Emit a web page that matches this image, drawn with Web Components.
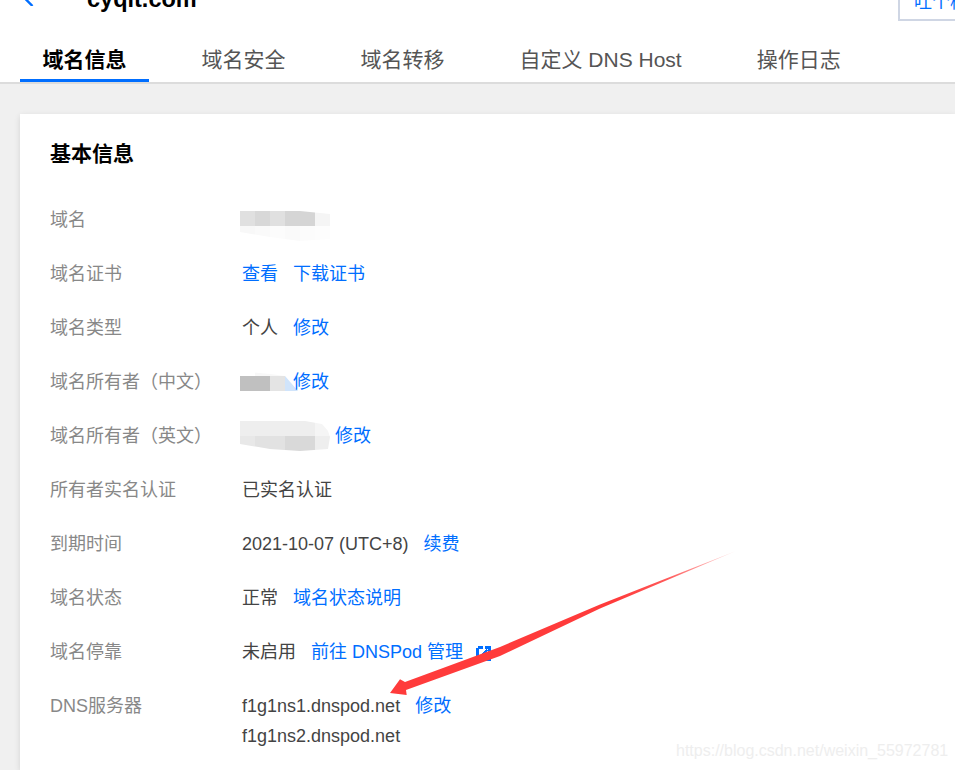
<!DOCTYPE html>
<html lang="zh"><head><meta charset="utf-8"><title>基本信息</title>
<style>
html,body{margin:0;padding:0;height:770px;overflow:hidden;background:#f0f0f0;}
body{font-family:"Liberation Sans","Noto Sans CJK SC",sans-serif;position:relative;}
</style></head><body>
<dp-header title-text="cyqit.com" action="吐个槽"></dp-header>
<dp-tabs>
  <dp-tab active>域名信息</dp-tab><dp-tab>域名安全</dp-tab><dp-tab>域名转移</dp-tab><dp-tab>自定义 DNS Host</dp-tab><dp-tab>操作日志</dp-tab>
</dp-tabs>
<dp-card heading="基本信息">
  <dp-row label="域名"><dp-mosaic w="78" x="-2" y="6" cols="6" clip="0 0,60px 0,90px 3px,90px 28px,60px 30px,30px 26px,0 21px" colors="#e0e0e0 #d8d8d8 #e0e0e0 #d5d5d5 #d5d5d5 #f5f5f5 #f8f8f8 #fafafa #fcfcfc #fafafa #fcfcfc #fdfdfd"></dp-mosaic></dp-row>
  <dp-row label="域名证书"><dp-link>查看</dp-link><dp-link>下载证书</dp-link></dp-row>
  <dp-row label="域名类型"><span>个人</span><dp-link>修改</dp-link></dp-row>
  <dp-row label="域名所有者（中文）"><dp-mosaic w="36" x="-2" y="-6" cols="4" clip="0 10px,30px 13px,45px 15px,58px 30px,0 30px" colors="#ffffff #f8f8f8 #f8f8f8 #ffffff #c0c0c0 #c0c0c0 #e4e4e4 #d0e4fb"></dp-mosaic><dp-link>修改</dp-link></dp-row>
  <dp-row label="域名所有者（英文）"><dp-mosaic w="78" x="-2" y="0" cols="6" clip="0 0,65px 0,82px 3px,88px 10px,90px 16px,88px 28px,60px 30px,30px 28px,0 23px" colors="#eeeeee #eeeeee #eeeeee #eeeeee #eeeeee #f5f5f5 #e8e8e8 #e2e2e2 #e2e2e2 #d9d9d9 #d9d9d9 #eeeeee"></dp-mosaic><dp-link>修改</dp-link></dp-row>
  <dp-row label="所有者实名认证"><span>已实名认证</span></dp-row>
  <dp-row label="到期时间"><span>2021-10-07 (UTC+8)</span><dp-link>续费</dp-link></dp-row>
  <dp-row label="域名状态"><span>正常</span><dp-link>域名状态说明</dp-link></dp-row>
  <dp-row label="域名停靠"><span>未启用</span><dp-link>前往 DNSPod 管理<dp-ext-icon></dp-ext-icon></dp-link></dp-row>
  <dp-row label="DNS服务器"><div><div style="display:flex;gap:15px"><span>f1g1ns1.dnspod.net</span><dp-link>修改</dp-link></div><div>f1g1ns2.dnspod.net</div></div></dp-row>
</dp-card>
<dp-arrow></dp-arrow>
<dp-watermark>https://blog.csdn.net/weixin_55972781</dp-watermark>
<script>
function def(name, html, extra){
  customElements.define(name, class extends HTMLElement{
    constructor(){super();this.attachShadow({mode:"open"}).innerHTML=html;}
    connectedCallback(){ if(extra) extra(this); }
  });
}
def("dp-header",`<style>
:host{display:block;height:38px;overflow:hidden;background:#fff;}
.in{display:flex;align-items:flex-start;margin-top:-16px;height:36px;}
svg{flex:none;margin:0 0 0 21px;width:16px;height:22px;}
h1{margin:0 0 0 50px;font:bold 23.5px/30px "Liberation Sans",sans-serif;color:#000;flex:1;}
button{all:unset;box-sizing:border-box;width:80px;height:36.500px;border:2px solid #cfd6e4;padding:0 0 0 14px;color:#006eff;font:18px/16px "Liberation Sans","Noto Sans CJK SC",sans-serif;margin-right:-23px;white-space:nowrap;}
</style><div class="in"><svg viewBox="0 0 16 22"><path d="M11 6 3.500 14l8 8" fill="none" stroke="#006eff" stroke-width="2.400"/></svg><h1></h1><button></button></div>`,
el=>{el.shadowRoot.querySelector("h1").textContent=el.getAttribute("title-text");el.shadowRoot.querySelector("button").textContent=el.getAttribute("action");});
def("dp-tabs",`<style>
:host{display:flex;gap:30px;background:#fff;padding:0 0 0 20px;border-bottom:2px solid #dcdcdc;height:44px;}
</style><slot></slot>`);
def("dp-tab",`<style>
:host{display:block;box-sizing:border-box;height:44px;padding:7px 22.500px 0;font-size:21px;line-height:30px;color:#555;white-space:nowrap;}
:host([active]){color:#000;font-weight:bold;border-bottom:3px solid #006eff;}
</style><slot></slot>`);
def("dp-card",`<style>
:host{display:block;box-sizing:border-box;background:#fff;margin:30px 0 0 20px;padding:25px 0 0 30px;box-shadow:0 2px 6px rgba(0,0,0,.12);height:656px;}
h2{margin:0 0 24px;font:bold 21px/30px "Liberation Sans","Noto Sans CJK SC",sans-serif;color:#000;}
</style><h2></h2><slot></slot>`,
el=>{el.shadowRoot.querySelector("h2").textContent=el.getAttribute("heading");});
def("dp-row",`<style>
:host{display:flex;padding:12px 0;font-size:18px;line-height:30px;color:#444;}
.l{flex:none;width:192px;color:#888;}
.v{display:flex;gap:15px;align-items:flex-start;}
</style><div class="l"></div><div class="v"><slot></slot></div>`,
el=>{el.shadowRoot.querySelector(".l").textContent=el.getAttribute("label");});
def("dp-link",`<style>
:host{display:inline-flex;align-items:center;position:relative;color:#006eff;white-space:nowrap;cursor:pointer;}
</style><slot></slot>`);
def("dp-ext-icon",`<style>
:host{display:inline-flex;margin:3px 0 0 13px;width:15px;height:15px;}
</style><svg width="15" height="15" viewBox="0 0 15 15" shape-rendering="crispEdges"><path d="M1.500 1.500h5M1.500 1.500v12h12v-5M9 1.500h4.500V6" fill="none" stroke="#006eff" stroke-width="3"/><path d="M5 10 11 4" stroke="#006eff" stroke-width="2"/></svg>`);
def("dp-mosaic",`<style>
:host{display:inline-block;position:relative;height:30px;}
.g{position:absolute;display:grid;grid-auto-rows:15px;}
.g i{display:block;width:15px;height:15px;}
</style><div class="g"></div>`,
el=>{
  const g=el.shadowRoot.querySelector(".g"),cols=+el.getAttribute("cols");
  el.style.width=el.getAttribute("w")+"px";
  g.style.left=el.getAttribute("x")+"px";g.style.top=el.getAttribute("y")+"px";
  g.style.gridTemplateColumns=`repeat(${cols},15px)`;
  if(el.hasAttribute("clip")) g.style.clipPath=`polygon(${el.getAttribute("clip")})`;
  el.getAttribute("colors").split(" ").forEach(c=>{const i=document.createElement("i");i.style.background=c;g.appendChild(i);});
});
def("dp-arrow",`<style>
:host{position:absolute;left:0;top:0;width:955px;height:770px;pointer-events:none;display:block;}
</style><svg width="955" height="770" viewBox="0 0 955 770"><defs><linearGradient id="f" gradientUnits="userSpaceOnUse" x1="736" y1="551" x2="390" y2="693"><stop offset="0" stop-color="#ff3b3b" stop-opacity=".15"/><stop offset=".2" stop-color="#ff3b3b" stop-opacity=".85"/><stop offset=".35" stop-color="#ff3b3b"/><stop offset="1" stop-color="#ff3b3b"/></linearGradient></defs>
<path d="M736 551 600 604.500 500 647 405 682 400 679.300 390 693 406.700 695 406 690 500 656 600 608.500Z" fill="url(#f)"/></svg>`);
def("dp-watermark",`<style>
:host{position:absolute;left:676px;top:742px;font:16px/18px "Liberation Sans",sans-serif;color:#eeeeee;white-space:nowrap;}
</style><slot></slot>`);
</script>
</body></html>
